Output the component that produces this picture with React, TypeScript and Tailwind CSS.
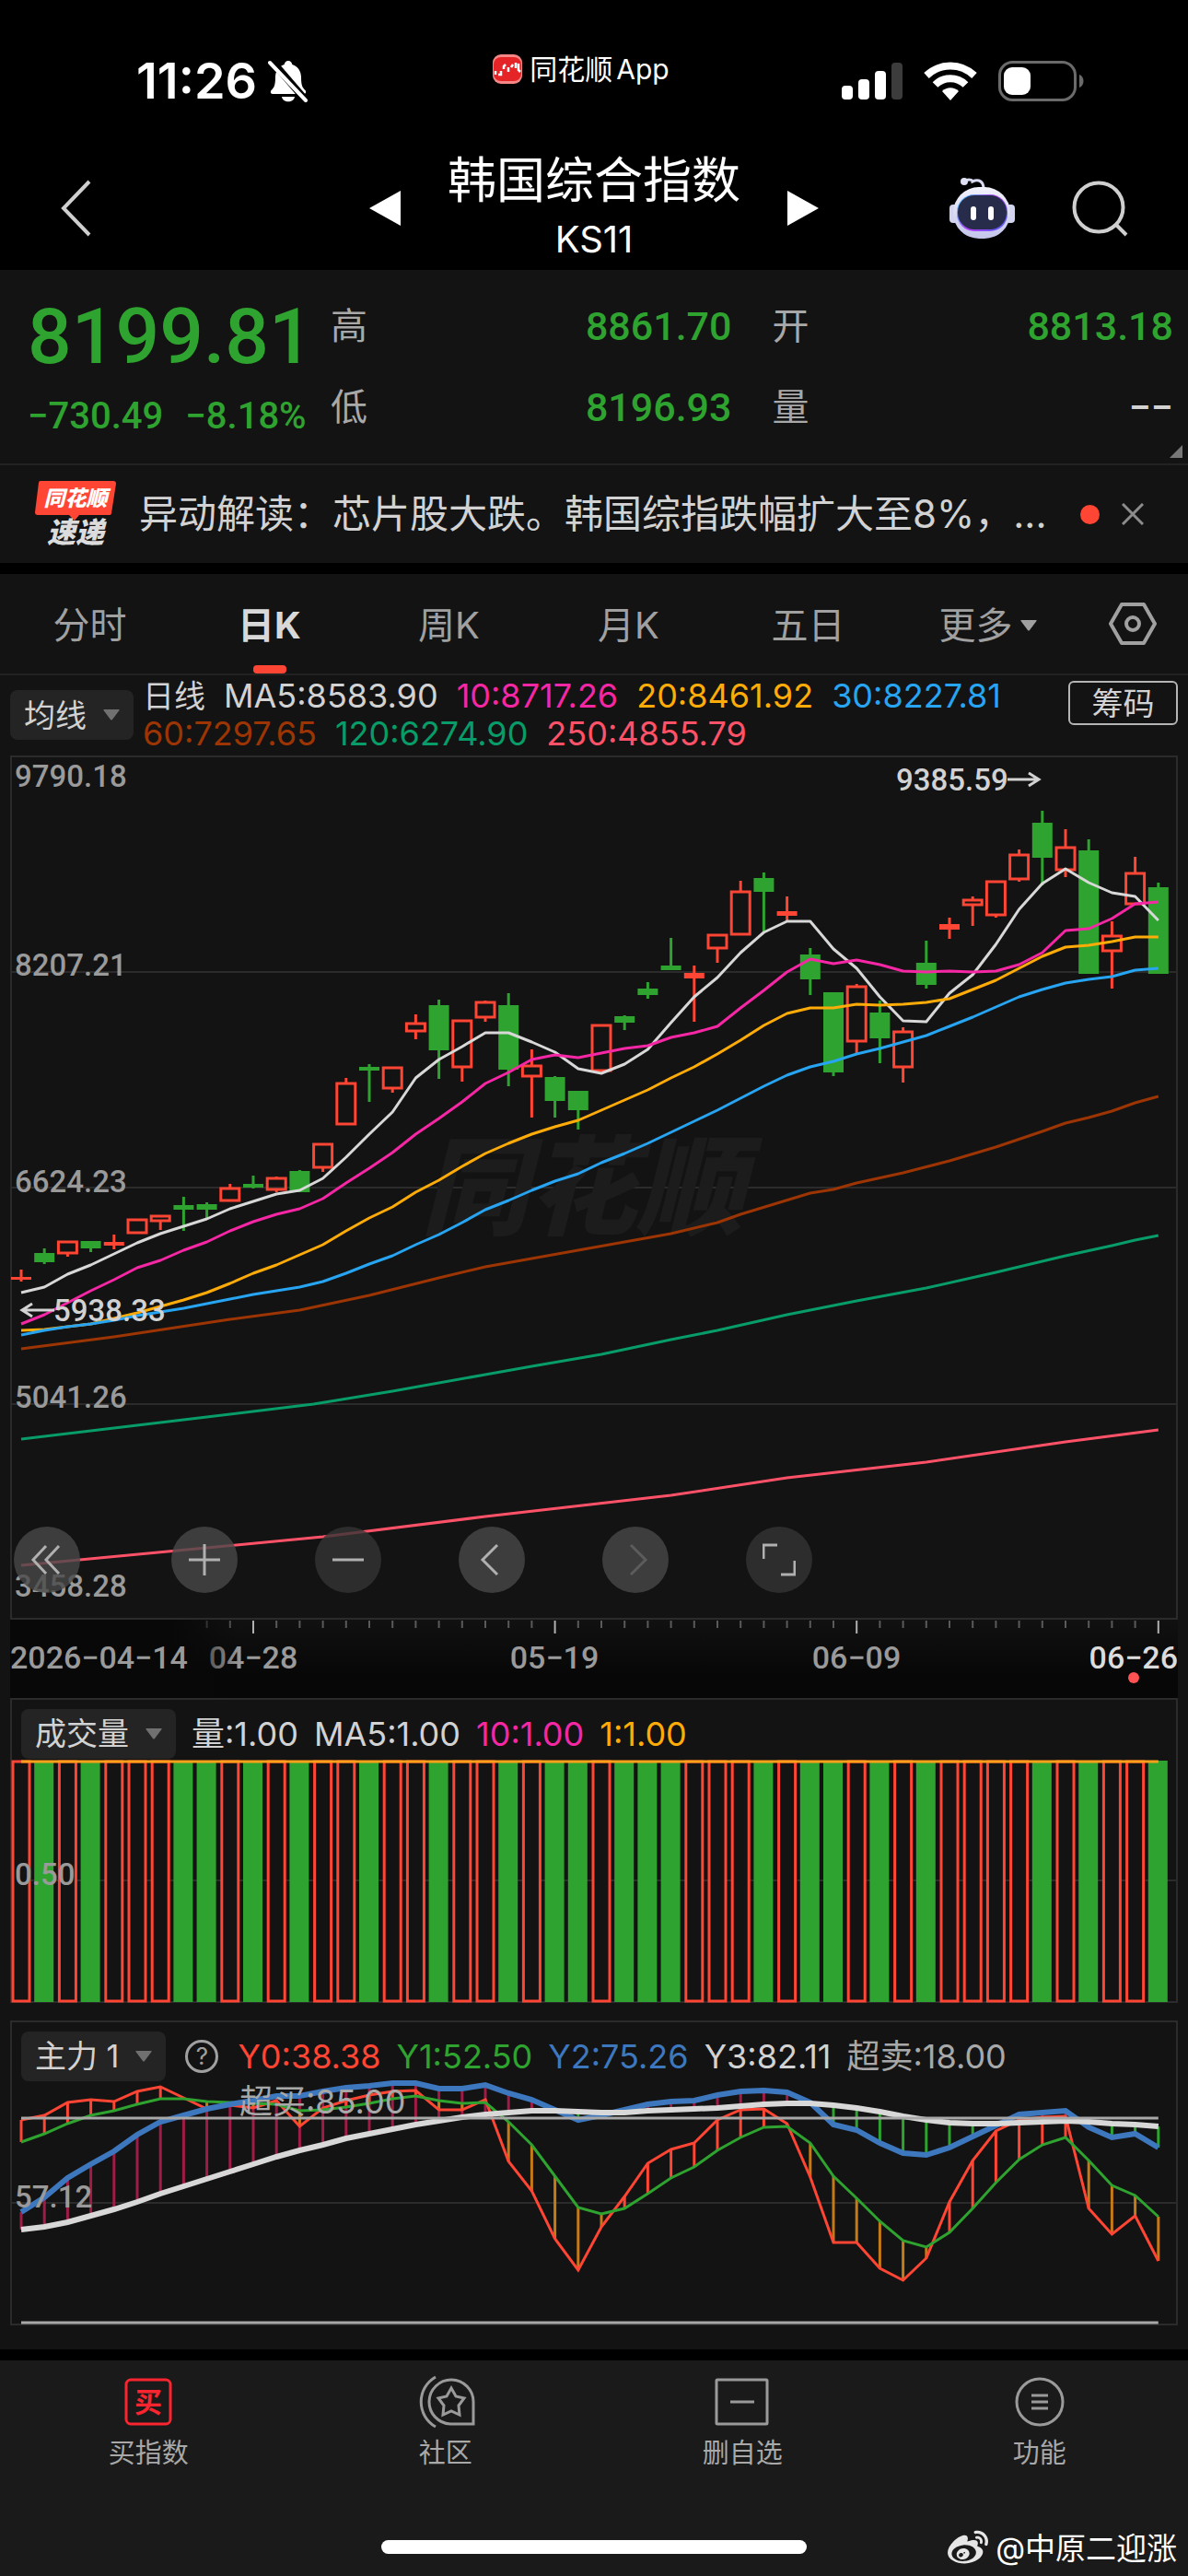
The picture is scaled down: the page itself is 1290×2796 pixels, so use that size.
import React, { useState } from 'react';
import { FaWeibo } from 'react-icons/fa';

const RED = '#ff4533';
const GREEN = '#2fa32f';

// plot geometry, shared by all three charts
const PLOT_W = 1268;
const STEP = 25.2;
const xAt = (i: number) => 12 + i * STEP;

type Candle = [up: 0 | 1, top: number, bottom: number, high: number, low: number];

const candles: Candle[] = [
  [1, 566, 569, 558, 571], [0, 540, 550, 535, 552], [1, 527, 541, 527, 544], [0, 527, 535, 527, 539],
  [1, 528, 532, 520, 536], [1, 503, 519, 503, 519], [1, 499, 506, 499, 515], [0, 488, 493, 479, 516],
  [0, 487, 493, 485, 502], [1, 469, 484, 465, 484], [0, 465, 469, 456, 470], [1, 458, 472, 457, 474],
  [0, 451, 474, 450, 474], [1, 421, 448, 421, 452], [1, 355, 401, 350, 401], [0, 338, 342, 335, 376],
  [1, 338, 362, 338, 366], [1, 290, 300, 281, 308], [0, 271, 320, 265, 351], [1, 287, 339, 287, 354],
  [1, 267, 285, 266, 289], [0, 271, 341, 258, 359], [1, 336, 349, 319, 393], [0, 349, 375, 348, 393],
  [0, 364, 385, 364, 406], [1, 292, 343, 292, 343], [0, 283, 290, 282, 298], [0, 253, 260, 246, 264],
  [0, 228, 233, 198, 233], [1, 236, 242, 228, 289], [1, 194, 210, 194, 225], [1, 147, 195, 136, 195],
  [0, 133, 148, 127, 192], [1, 169, 174, 153, 180], [0, 216, 243, 209, 260], [0, 257, 344, 257, 348],
  [1, 250, 311, 248, 323], [0, 279, 307, 266, 334], [1, 299, 339, 295, 355], [0, 225, 249, 201, 253],
  [1, 183, 189, 176, 199], [1, 156, 163, 153, 185], [1, 136, 174, 136, 176], [1, 107, 135, 102, 137],
  [0, 73, 111, 60, 141], [1, 99, 125, 80, 132], [0, 103, 237, 91, 237], [1, 195, 213, 180, 253],
  [1, 127, 162, 110, 162], [0, 143, 237, 138, 237],
];

const ma5 = [583, 577, 563, 553, 541, 529, 519, 511, 503, 492, 484, 476, 472, 459, 436, 411, 387, 350, 330, 316, 301, 301, 311, 322, 340, 345, 335, 319, 290, 262, 241, 214, 192, 180, 180, 210, 231, 262, 288, 289, 258, 238, 205, 167, 139, 123, 138, 149, 153, 179];
const ma10 = [617, 607, 594, 581, 569, 556, 548, 537, 528, 516, 506, 498, 492, 481, 464, 448, 431, 411, 394, 376, 356, 344, 330, 325, 328, 323, 318, 315, 306, 301, 294, 274, 255, 235, 221, 226, 222, 227, 234, 235, 234, 235, 234, 227, 214, 190, 188, 177, 161, 159];
const ma20 = [624, 623, 620, 617, 611, 605, 598, 591, 583, 573, 562, 553, 542, 531, 516, 502, 490, 474, 461, 446, 432, 421, 411, 403, 396, 385, 374, 363, 350, 338, 324, 309, 293, 280, 274, 274, 270, 271, 270, 268, 264, 254, 244, 231, 218, 208, 206, 202, 197, 197];
const ma30 = [629, 624, 620, 617, 613, 608, 604, 600, 595, 590, 585, 581, 577, 571, 562, 552, 543, 531, 520, 507, 493, 483, 472, 462, 454, 442, 432, 421, 409, 397, 385, 372, 359, 347, 338, 332, 324, 318, 311, 304, 294, 284, 273, 262, 254, 247, 243, 240, 233, 231];

const toPoints = (ys: number[]) => ys.map((y, i) => `${xAt(i)},${y}`).join(' ');
const toSparse = (pts: number[][]) => pts.map(([i, y]) => `${xAt(i)},${y}`).join(' ');

// slow averages are nearly straight, a few knots are enough
const ma60 = [[0, 644], [4, 631], [9, 612], [12, 602], [15, 586], [18, 567], [20, 555], [24, 537], [28, 519], [30, 507], [31, 498], [34, 475], [35, 471], [36, 464], [38, 453], [40, 440], [42, 425], [44, 408], [45, 399], [46, 393], [47, 386], [48, 377], [49, 370]];
const ma120 = [[0, 742], [8, 718], [12.6, 704], [16, 690], [20, 672], [22, 663], [25, 650], [28, 634], [30, 624], [33, 607], [36, 592], [39, 578], [42, 561], [45, 543], [47, 532], [48, 526], [49, 521]];
const ma250 = [[0, 879], [13, 848], [20, 826], [28, 803], [33, 784], [39, 767], [45, 745], [49, 732]];

const y0 = [108, 103, 89, 86, 88, 77, 72, 84, 96, 92, 95, 87, 115, 95, 87, 81, 77, 76, 97, 97, 86, 153, 185, 237, 271, 224, 191, 155, 140, 133, 108, 97, 96, 112, 170, 241, 241, 269, 282, 258, 197, 152, 120, 108, 105, 104, 204, 232, 212, 261];
const y1 = [132, 123, 112, 103, 98, 91, 85, 85, 88, 89, 90, 91, 98, 97, 94, 90, 85, 82, 87, 90, 89, 110, 135, 169, 203, 210, 204, 188, 171, 159, 141, 127, 116, 115, 133, 169, 193, 218, 239, 246, 230, 204, 176, 151, 135, 127, 152, 179, 190, 213];
const y2 = [208, 192, 171, 156, 142, 124, 110, 103, 96, 91, 87, 82, 82, 77, 73, 71, 68, 68, 74, 74, 70, 79, 86, 97, 108, 103, 97, 91, 88, 87, 81, 77, 76, 78, 89, 113, 119, 133, 144, 146, 138, 126, 114, 102, 100, 98, 116, 127, 123, 138];
const y3 = [227, 224, 219, 212, 205, 197, 188, 180, 172, 164, 156, 148, 141, 135, 128, 123, 118, 113, 109, 105, 102, 100, 98, 98, 99, 100, 100, 98, 97, 96, 95, 93, 91, 90, 90, 92, 95, 99, 104, 108, 111, 112, 112, 111, 110, 109, 110, 112, 113, 115];

const NUM = 'font-[Roboto,sans-serif]';

const Caret = ({ className }: { className: string }) => (
  <svg viewBox="0 0 18 12" className={className} fill="currentColor">
    <path d="M1 0h16q1 0 .5 1L10 11q-1 1-2 0L.5 1Q0 0 1 0z" />
  </svg>
);

const StatusBar = () => (
  <div className="grid grid-cols-3 items-center px-[112px] pt-[60px] h-[116px]">
    <div className="flex items-center gap-3 pl-9">
      <span className="text-[54px] leading-[54px] font-semibold">11:26</span>
      <svg viewBox="0 0 44 46" className="w-[44px] h-[46px]">
        <path d="M22 1c2.500 0 4 2 4.300 4 6.700 2 9.700 8 9.700 14 0 9 1.500 11 4.500 14 1 1 1 4-1.500 4H5c-2.500 0-2.500-3-1.500-4C6.500 30 8 28 8 19 8 13 11 7 17.700 5 18 3 19.500 1 22 1z" fill="#fff" />
        <path d="M15 40h14c-1 7-13 7-14 0z" fill="#fff" />
        <path d="M4 1l38 44" stroke="#000" strokeWidth="8" />
        <path d="M2 3l39 41" stroke="#fff" strokeWidth="4" strokeLinecap="round" />
      </svg>
    </div>
    <div className="flex items-center justify-center gap-2 self-start -mt-1 -ml-7">
      <svg viewBox="0 0 32 32" className="w-8 h-8">
        <rect width="32" height="32" rx="9" fill="#f58787" />
        <rect x="1" y="3" width="30" height="26" rx="8" fill="#e52427" />
        <path d="M3 22v-4M6 22h3v-4M12 16v-3l2-2M17 19v-5M20 14l2-3M25 15V9M28 10v7l2 2" stroke="#fff" strokeWidth="2.500" fill="none" />
      </svg>
      <span className="flex gap-1 text-[30px] leading-[38px]">
        <span>同花顺</span>
        <span>App</span>
      </span>
    </div>
    <div className="flex items-center justify-end gap-[23px]">
      <svg viewBox="0 0 66 42" className="w-[66px] h-[42px]" fill="#fff">
        <rect x="0" y="26" width="12" height="15" rx="4" />
        <rect x="18" y="19" width="12" height="22" rx="4" />
        <rect x="36" y="10" width="12" height="31" rx="4" />
        <rect x="54" y="1" width="12" height="40" rx="4" fill="#3c3c3c" />
      </svg>
      <svg viewBox="0 0 58 42" className="w-[58px] h-[42px]" fill="none" stroke="#fff" strokeWidth="8">
        <path d="M3 15c15-14 37-14 52 0" />
        <path d="M12.500 25c9-9 24-9 33 0" />
        <path d="M29 42l-9-10c5-5 13-5 18 0z" fill="#fff" stroke="none" />
      </svg>
      <svg viewBox="0 0 94 44" className="w-[94px] h-[44px]">
        <rect x="1.500" y="1.500" width="82" height="41" rx="14" fill="none" stroke="#6a6a6a" strokeWidth="3" />
        <rect x="6" y="7" width="29" height="30" rx="9" fill="#fff" />
        <path d="M88 15c6 2 6 12 0 14z" fill="#6a6a6a" />
      </svg>
    </div>
  </div>
);

const Header = () => (
  <header className="relative flex items-center justify-between h-[177px] px-16 pt-[42px]">
    <button type="button" aria-label="返回">
      <svg viewBox="0 0 36 64" className="w-9 h-16" fill="none" stroke="#cfcfcf" strokeWidth="4">
        <path d="M33 3L5 32l28 29" />
      </svg>
    </button>
    <div className="absolute left-1/2 -translate-x-1/2 top-[46px] flex items-center gap-[51px]">
      <button type="button" aria-label="上一个">
        <svg viewBox="0 0 34 38" className="w-[34px] h-[38px]"><path d="M34 0v38L0 19z" fill="#fff" /></svg>
      </button>
      <div className="flex flex-col items-center">
        <h1 className="text-[53px] leading-[68px]">韩国综合指数</h1>
        <span className="text-[40px] leading-[60px]">KS11</span>
      </div>
      <button type="button" aria-label="下一个">
        <svg viewBox="0 0 34 38" className="w-[34px] h-[38px]"><path d="M0 0v38l34-19z" fill="#fff" /></svg>
      </button>
    </div>
    <div className="flex items-center gap-[62px]">
      <button type="button" aria-label="智能助手">
        <svg viewBox="0 0 72 68" className="w-[72px] h-[68px]">
          <defs>
            <linearGradient id="head" x1="0" y1="0" x2="0" y2="1">
              <stop offset="0" stopColor="#f3f3fc" />
              <stop offset="1" stopColor="#c3c4ea" />
            </linearGradient>
            <linearGradient id="ring" x1="0" y1="0.200" x2="1" y2="0.800">
              <stop offset="0" stopColor="#55c8ff" />
              <stop offset="0.500" stopColor="#b13df5" />
              <stop offset="1" stopColor="#5a5cf5" />
            </linearGradient>
          </defs>
          <path d="M17 5c4-3 9-2 9 0 7-3 12 0 12 8" fill="none" stroke="#d9daf2" strokeWidth="3" />
          <circle cx="17" cy="5" r="4" fill="#e0e1f5" />
          <rect x="1" y="30" width="10" height="20" rx="4" fill="#d3d4ef" />
          <rect x="62" y="30" width="10" height="20" rx="4" fill="#d3d4ef" />
          <rect x="5" y="11" width="62" height="56" rx="28" fill="url(#head)" />
          <rect x="9" y="19" width="55" height="40" rx="19" fill="url(#ring)" />
          <rect x="10" y="20" width="53" height="37" rx="18" fill="#272c4b" />
          <rect x="24" y="32" width="6" height="15" rx="3" fill="#fff" />
          <rect x="43" y="32" width="6" height="15" rx="3" fill="#fff" />
        </svg>
      </button>
      <button type="button" aria-label="搜索">
        <svg viewBox="0 0 62 62" className="w-[62px] h-[62px]" fill="none" stroke="#cfcfcf" strokeWidth="4">
          <circle cx="29" cy="30" r="26.500" />
          <path d="M47 48l12 12" />
        </svg>
      </button>
    </div>
  </header>
);

const Stat = ({ label, value, green }: { label: string; value: string; green?: boolean }) => (
  <div className="flex items-center justify-between h-[88px]">
    <dt className="text-[40px] leading-[48px] text-[#a8a8a8]">{label}</dt>
    <dd className={`${NUM} text-[43px] leading-[48px] font-medium ${green ? 'text-[#2fa32f]' : 'text-[#d2d2d2]'}`}>
      {value}
    </dd>
  </div>
);

const Quote = () => (
  <section className="relative flex bg-[#131313] h-[212px] pt-[17px] border-b-2 border-[#222]">
    <div className={`${NUM} text-[#2fa32f] pl-[30px] w-[359px]`}>
      <div className="text-[84px] leading-[112px] font-medium">8199.81</div>
      <div className="flex gap-6 text-[40px] leading-[60px] font-medium">
        <span>−730.49</span>
        <span>−8.18%</span>
      </div>
    </div>
    <dl className="flex-1 grid grid-cols-2 content-start gap-x-[44px] pr-4">
      <Stat label="高" value="8861.70" green />
      <Stat label="开" value="8813.18" green />
      <Stat label="低" value="8196.93" green />
      <Stat label="量" value="−−" />
    </dl>
    <svg viewBox="0 0 14 14" className="absolute right-[6px] bottom-[6px] w-[14px] h-[14px]">
      <path d="M14 0v14H0z" fill="#777" />
    </svg>
  </section>
);

const Notice = () => (
  <section className="flex items-center bg-[#131313] h-[106px] pl-[38px] pr-[48px]">
    <div className="relative w-[88px] h-[74px] mr-[25px] shrink-0 italic font-black">
      <svg viewBox="0 0 88 74" className="absolute inset-0 w-full h-full">
        <path d="M6 1h79q3 0 3 3l-5 32q0 2-3 2H48l-5 6-6-6H3q-3 0-3-3L4 3q0-2 2-2z" fill={RED} />
      </svg>
      <div className="relative text-center text-[23px] leading-[40px]">同花顺</div>
      <div className="relative text-center text-[31px] leading-[34px] text-[#dcdcdc]">速递</div>
    </div>
    <a href="#news" className="flex-1 truncate text-[42px] leading-[56px] text-[#d2d2d2]">
      异动解读：芯片股大跌。韩国综指跌幅扩大至8%，...
    </a>
    <span className="w-[21px] h-[21px] rounded-full bg-[#ff4533] mr-[24px]" />
    <button type="button" aria-label="关闭">
      <svg viewBox="0 0 24 24" className="w-6 h-6" stroke="#8c8c8c" strokeWidth="3"><path d="M1 1l22 22M23 1L1 23" /></svg>
    </button>
  </section>
);

const tabs = ['分时', '日K', '周K', '月K', '五日', '更多'];

const PeriodTabs = () => {
  const [active, setActive] = useState('日K');
  return (
    <nav className="flex bg-[#131313] h-[110px] border-b-2 border-[#222]">
      {tabs.map((tab) => (
        <button
          key={tab}
          type="button"
          onClick={() => setActive(tab)}
          className={`relative flex-1 flex items-center justify-center gap-2 pt-[3px] text-[40px] ${tab === active ? 'font-bold text-[#d8d8d8]' : 'text-[#a0a0a0]'}`}
        >
          {tab}
          {tab === '更多' && <Caret className="w-[18px] h-[12px]" />}
          {tab === active && (
            <span className="absolute bottom-0 left-1/2 -translate-x-1/2 w-9 h-[9px] rounded bg-[#ff4533]" />
          )}
        </button>
      ))}
      <button type="button" aria-label="设置" className="w-[120px] flex items-center justify-center">
        <svg viewBox="0 0 52 46" className="w-[52px] h-[46px]" fill="none" stroke="#a0a0a0" strokeWidth="4" strokeLinejoin="round">
          <path d="M14 2h24l12 21-12 21H14L2 23z" />
          <circle cx="26" cy="23" r="7" />
        </svg>
      </button>
    </nav>
  );
};

const Picker = ({ label }: { label: string }) => (
  <button type="button" className="flex items-center gap-[18px] shrink-0 h-[54px] px-[15px] rounded-lg bg-[#242424] text-[34px] text-[#d2d2d2]">
    {label}
    <Caret className="w-[18px] h-[12px] text-[#707070]" />
  </button>
);

const MaLegend = () => (
  <div className="flex items-start h-[87px] px-[11px] text-[36px] leading-[41px]">
    <div className="pt-4 mr-[10px]"><Picker label="均线" /></div>
    <div className="flex-1 flex flex-wrap gap-x-5 pt-[2px]">
      <span className="text-[34px] text-[#d2d2d2]">日线</span>
      <span className="text-[#d2d2d2]">MA5:8583.90</span>
      <span className="text-[#f527a4]">10:8717.26</span>
      <span className="text-[#ffab08]">20:8461.92</span>
      <span className="text-[#27a5f2]">30:8227.81</span>
      <span className="basis-full h-0" />
      <span className="text-[#9c3503]">60:7297.65</span>
      <span className="text-[#079c68]">120:6274.90</span>
      <span className="text-[#ff5268]">250:4855.79</span>
    </div>
    <button type="button" className="mt-[6px] w-[119px] h-[48px] flex items-center justify-center border-2 border-[#b5b5b5] rounded-md text-[34px] text-[#d2d2d2]">
      筹码
    </button>
  </div>
);

const RoundButton = ({ label, dim, children }: { label: string; dim?: boolean; children: React.ReactNode }) => (
  <button
    type="button"
    aria-label={label}
    className={`w-[72px] h-[72px] rounded-full flex items-center justify-center ${dim ? 'bg-[#343434]/80' : 'bg-[#494949]/80'}`}
  >
    <svg viewBox="0 0 36 36" className="w-9 h-9" fill="none" stroke="#b0b0b0" strokeWidth="3">{children}</svg>
  </button>
);

const PriceChart = () => (
  <div className="relative mx-[11px] text-[#9a9a9a]">
    <svg viewBox={`0 0 ${PLOT_W} 938`} className={`block w-full h-auto ${NUM}`}>
      <rect x="1" y="1" width={PLOT_W - 2} height="936" fill="none" stroke="#2b2b2b" strokeWidth="2" />
      {[235, 469, 704].map((y) => (
        <line key={y} x1="0" x2={PLOT_W} y1={y} y2={y} stroke="#2b2b2b" strokeWidth="2" />
      ))}
      <text x="446" y="511" fontSize="117" fontWeight="900" fontStyle="italic" fill="#1c1c1c" className="font-['Noto_Sans_CJK_SC',sans-serif]">同花顺</text>
      {candles.map(([up, top, bottom, high, low], i) => {
        const x = xAt(i);
        const color = up ? RED : GREEN;
        const hollow = up && bottom - top > 6;
        return (
          <g key={i} stroke={color} strokeWidth="3">
            <line x1={x} x2={x} y1={high} y2={hollow ? top : low} />
            {hollow && <line x1={x} x2={x} y1={bottom} y2={low} />}
            {hollow ? (
              <rect x={x - 10} y={top + 1} width="20" height={bottom - top - 2} fill="none" />
            ) : (
              <rect x={x - 11} y={top} width="22" height={bottom - top} fill={color} stroke="none" />
            )}
          </g>
        );
      })}
      <g fill="none" strokeWidth="3" strokeLinejoin="round">
        <polyline points={toSparse(ma250)} stroke="#ff5268" />
        <polyline points={toSparse(ma120)} stroke="#079c68" />
        <polyline points={toSparse(ma60)} stroke="#9c3503" />
        <polyline points={toPoints(ma5)} stroke="#d8d8d8" />
        <polyline points={toPoints(ma10)} stroke="#f527a4" />
        <polyline points={toPoints(ma20)} stroke="#ffab08" />
        <polyline points={toPoints(ma30)} stroke="#27a5f2" />
      </g>
      <g fill="#9a9a9a" fontSize="33" fontWeight="500">
        <text x="5" y="34">9790.18</text>
        <text x="5" y="239">8207.21</text>
        <text x="5" y="474">6624.23</text>
        <text x="5" y="708">5041.26</text>
        <text x="5" y="913">3458.28</text>
      </g>
      <g fill="#d2d2d2" fontSize="33" fontWeight="500">
        <text x="962" y="38">9385.59</text>
        <text x="47" y="614">5938.33</text>
      </g>
      <g fill="none" stroke="#d2d2d2" strokeWidth="3">
        <path d="M1083 26h34M1106 19l11 7-11 7" />
        <path d="M48 602H13M24 595l-11 7 11 7" />
      </g>
    </svg>
    <div className="absolute left-1 bottom-[29px] flex gap-[84px]">
      <div className="mr-[15px] h-[72px]">
        <RoundButton label="收起"><path d="M17 3L3 18l14 15M31 3L17 18l14 15" /></RoundButton>
      </div>
      <RoundButton label="放大"><path d="M18 1v34M1 18h34" /></RoundButton>
      <RoundButton label="缩小" dim><path d="M1 18h34" /></RoundButton>
      <RoundButton label="左移"><path d="M24 2L8 18l16 16" /></RoundButton>
      <RoundButton label="右移"><path d="M13 2l16 16-16 16" stroke="#5c5c5c" /></RoundButton>
      <RoundButton label="全屏" dim><path d="M1 17V2h15M35 19v15H20" /></RoundButton>
    </div>
  </div>
);

const majorTicks = [10, 23, 36, 49];

const DateAxis = () => (
  <div className="mx-[11px]">
    <svg viewBox={`0 0 ${PLOT_W} 85`} className={`block w-full h-auto ${NUM}`} fontSize="34" fontWeight="500" fill="#9a9a9a">
      <defs>
        <linearGradient id="strip" x1="0" y1="0" x2="0" y2="1">
          <stop offset="0" stopColor="#111" />
          <stop offset="0.700" stopColor="#070707" />
        </linearGradient>
        <linearGradient id="fade">
          <stop offset="0.700" stopColor="#080808" />
          <stop offset="1" stopColor="#080808" stopOpacity="0" />
        </linearGradient>
      </defs>
      <rect width={PLOT_W} height="85" fill="url(#strip)" />
      {candles.map((_, i) => i > 7 && (
        <line
          key={i}
          x1={xAt(i)}
          x2={xAt(i)}
          y1="1"
          y2={majorTicks.includes(i) ? 15 : 9}
          stroke={majorTicks.includes(i) ? '#b0b0b0' : '#5a5a5a'}
          strokeWidth="2"
        />
      ))}
      <text x="264" y="53" textAnchor="middle">04−28</text>
      <rect width="250" height="85" fill="url(#fade)" />
      <text x="0" y="53">2026−04−14</text>
      <text x="591" y="53" textAnchor="middle">05−19</text>
      <text x="919" y="53" textAnchor="middle">06−09</text>
      <text x={PLOT_W} y="53" textAnchor="end" fill="#dcdcdc">06−26</text>
      <circle cx="1220" cy="63" r="6" fill="#ff5252" />
    </svg>
  </div>
);

const SubChart = ({ legend, children }: { legend: React.ReactNode; children: React.ReactNode }) => (
  <section className="relative mx-[11px]">
    <svg viewBox={`0 0 ${PLOT_W} 331`} className={`block w-full h-auto ${NUM}`}>
      <rect x="1" y="1" width={PLOT_W - 2} height="329" fill="none" stroke="#2b2b2b" strokeWidth="2" />
      <line x1="0" x2={PLOT_W} y1="198" y2="198" stroke="#2b2b2b" strokeWidth="2" />
      {children}
    </svg>
    <div className="absolute top-3 left-3 flex items-center gap-[17px] text-[36px] leading-[54px] text-[#d2d2d2]">{legend}</div>
  </section>
);

const VolumeChart = () => (
  <SubChart
    legend={
      <>
        <Picker label="成交量" />
        <span>量:1.00</span>
        <span>MA5:1.00</span>
        <span className="text-[#f527a4]">10:1.00</span>
        <span className="text-[#ffab08]">1:1.00</span>
      </>
    }
  >
    {candles.map(([up], i) =>
      up ? (
        <rect key={i} x={xAt(i) - 9} y="69" width="18" height="260" fill="#131313" stroke={RED} strokeWidth="3" />
      ) : (
        <rect key={i} x={xAt(i) - 11} y="68" width="21" height="262" fill={GREEN} />
      )
    )}
    <line x1={xAt(0)} x2={xAt(49)} y1="69" y2="69" stroke="#ffa01a" strokeWidth="3" />
    <text x="5" y="203" fontSize="33" fontWeight="500" fill="#9a9a9a">0.50</text>
  </SubChart>
);

const MainForceChart = () => (
  <SubChart
    legend={
      <>
        <Picker label="主力 1" />
        <button type="button" aria-label="说明" className="w-9 h-9 mx-1 rounded-full border-3 border-[#a0a0a0] text-[26px] leading-[30px] text-[#a0a0a0]">?</button>
        <span className="text-[#ff4533]">Y0:38.38</span>
        <span className="text-[#2fa32f]">Y1:52.50</span>
        <span className="text-[#3d78bf]">Y2:75.26</span>
        <span>Y3:82.11</span>
        <span className="text-[#a8a8a8]">超卖:18.00</span>
      </>
    }
  >
    {candles.map((_, i) => (
      <g key={i} strokeWidth="3">
        <line x1={xAt(i)} x2={xAt(i)} y1={y2[i]} y2={y3[i]} stroke={y2[i] < y3[i] ? '#a01c46' : GREEN} />
        <line x1={xAt(i)} x2={xAt(i)} y1={y0[i]} y2={y1[i]} stroke={y0[i] < y1[i] ? RED : '#c47a17'} />
      </g>
    ))}
    <g fill="none">
      <polyline points={toPoints(y0)} stroke={RED} strokeWidth="3" />
      <polyline points={toPoints(y1)} stroke={GREEN} strokeWidth="3" />
      <polyline points={toPoints(y2)} stroke="#3d78bf" strokeWidth="6" />
      <polyline points={toPoints(y3)} stroke="#d8d8d8" strokeWidth="6" />
      <line x1={xAt(0)} x2={xAt(49)} y1="106" y2="106" stroke="#a8a8a8" strokeWidth="3" />
      <line x1={xAt(0)} x2={xAt(49)} y1="328" y2="328" stroke="#a8a8a8" strokeWidth="3" />
    </g>
    <text x="5" y="203" fontSize="33" fontWeight="500" fill="#9a9a9a">57.12</text>
    <text x="249" y="101" fontSize="36" fill="#a8a8a8" className="font-[Inter,'Noto_Sans_CJK_SC',sans-serif]">超买:85.00</text>
  </SubChart>
);

const navItems = [
  {
    label: '买指数',
    icon: (
      <>
        <rect x="2" y="2" width="48" height="48" rx="5" stroke="#fb2530" />
        <text x="26" y="37" fontSize="30" fontWeight="700" textAnchor="middle" fill="#fb2530" stroke="none">买</text>
      </>
    ),
  },
  {
    label: '社区',
    icon: (
      <>
        <path d="M56 50H31a24 24 0 1 1 25-24z" />
        <path d="M15-1a31 31 0 0 0 0 54" />
        <path d="M32 11l5 9 9 2-6 8 1 10-9-4-9 4 1-10-6-8 9-2z" />
      </>
    ),
  },
  { label: '删自选', icon: <><rect x="-2" y="2" width="55" height="48" rx="1" /><path d="M13 26h26" /></> },
  { label: '功能', icon: <><circle cx="26" cy="26" r="25" /><path d="M17 19h18M17 26h18M17 33h18" /></> },
];

const BottomNav = () => (
  <footer className="relative bg-[#1a1a1a] border-t-[12px] border-black h-[246px]">
    <nav className="grid grid-cols-4">
      {navItems.map((item) => (
        <a key={item.label} href="#nav" className="flex flex-col items-center pt-[19px]">
          <svg viewBox="0 0 52 52" className="w-[52px] h-[52px] overflow-visible" fill="none" stroke="#9a9a9a" strokeWidth="3">
            {item.icon}
          </svg>
          <span className="mt-[10px] text-[29px] leading-[40px] text-[#a8a8a8]">{item.label}</span>
        </a>
      ))}
    </nav>
    <div className="absolute bottom-6 left-1/2 -translate-x-1/2 w-[462px] h-[15px] rounded-full bg-white" />
    <div className="absolute right-3 bottom-[6px] flex items-center gap-2 text-[33px] leading-[48px] text-white">
      <FaWeibo className="w-[44px] h-[44px] text-[#e6e6e6]" />
      @中原二迎涨
    </div>
  </footer>
);

export default function App() {
  return (
    <div className="min-h-screen w-full bg-black text-white font-[Inter,'Noto_Sans_CJK_SC',sans-serif]">
      <StatusBar />
      <Header />
      <Quote />
      <Notice />
      <main className="mt-3 bg-[#131313] pb-[26px]">
        <PeriodTabs />
        <MaLegend />
        <PriceChart />
        <DateAxis />
        <VolumeChart />
        <div className="h-[19px]" />
        <MainForceChart />
      </main>
      <BottomNav />
    </div>
  );
}
